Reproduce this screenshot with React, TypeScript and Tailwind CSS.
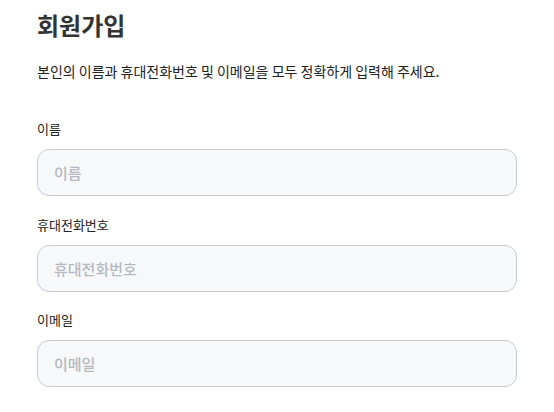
export default function App() {
  const fields = [
    { label: '이름', placeholder: '이름', type: 'text' },
    { label: '휴대전화번호', placeholder: '휴대전화번호', type: 'tel' },
    { label: '이메일', placeholder: '이메일', type: 'email' },
  ];

  return (
    <div
      className="min-h-screen bg-white pl-[37px] pt-[8px]"
      style={{ fontFamily: '"Noto Sans CJK KR", "Noto Sans", sans-serif' }}
    >
      <h1 className="text-[24px] leading-[34px] font-bold text-[#333333]">회원가입</h1>
      <p className="mt-[18px] text-[14px] leading-[22px] text-[#222222]">
        본인의 이름과 휴대전화번호 및 이메일을 모두 정확하게 입력해 주세요.
      </p>

      <div className="mt-[37px] flex flex-col gap-[18.5px] w-[480px]">
        {fields.map((f) => (
          <label key={f.label} className="flex flex-col gap-[10px]">
            <span className="text-[13px] leading-[20px] text-[#222222]">{f.label}</span>
            <input
              type={f.type}
              placeholder={f.placeholder}
              className="h-[47px] w-full rounded-[12px] border border-[#c6cbd3] bg-[#f7f8fa] px-[16px] text-[15px] font-medium text-[#222222] placeholder:text-[#b5b9c1] outline-none"
            />
          </label>
        ))}
      </div>
    </div>
  );
}
